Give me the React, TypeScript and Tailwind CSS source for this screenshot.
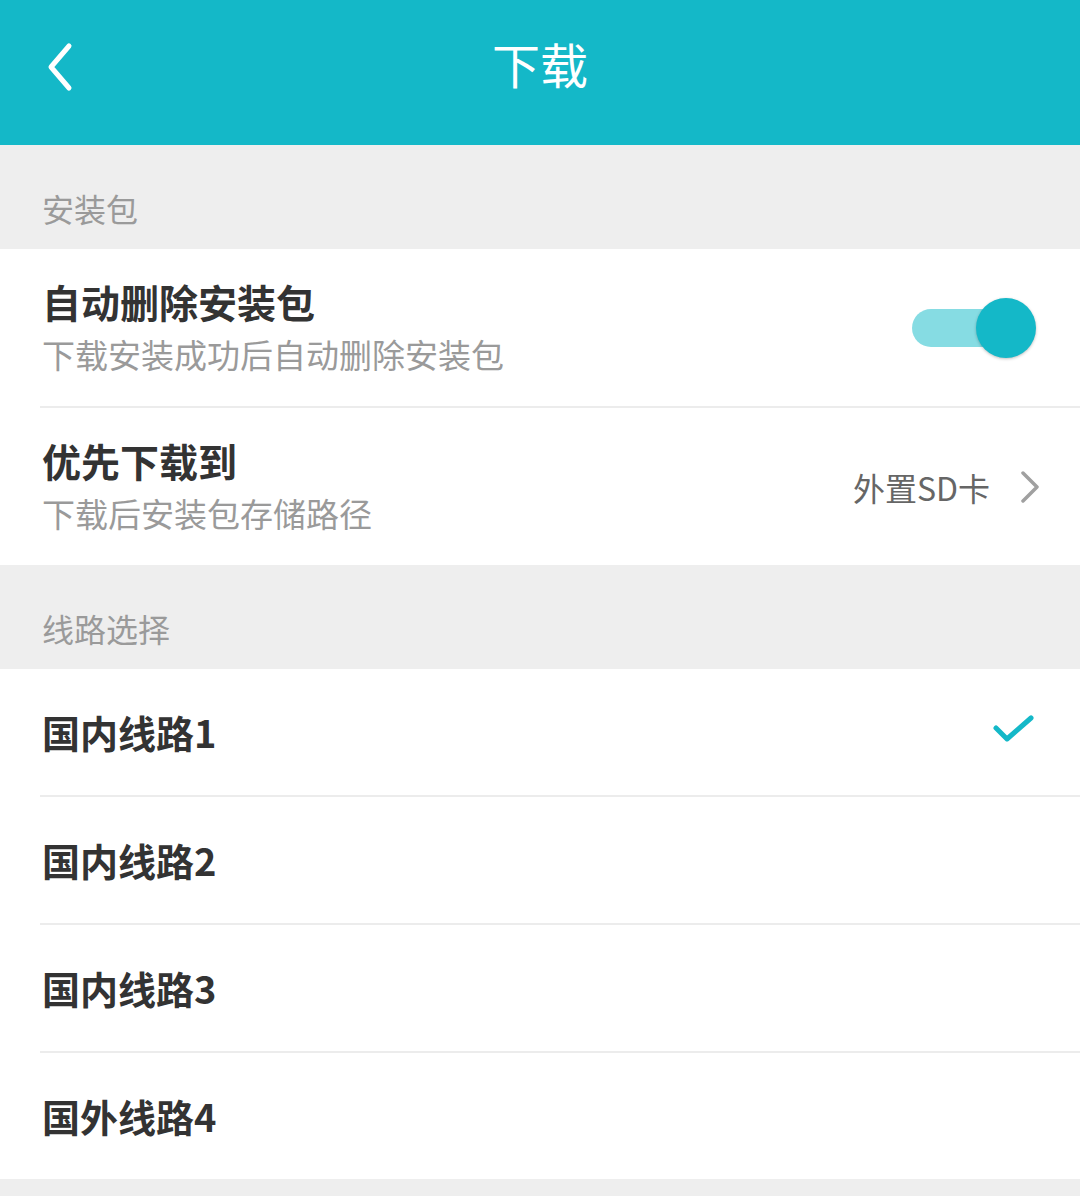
import React from 'react';

const font = { fontFamily: '"Noto Sans CJK SC", "Noto Sans", sans-serif' };

const routes = ['国内线路1', '国内线路2', '国内线路3', '国外线路4'];

function SectionHeader({ label }: { label: string }) {
  return (
    <div className="h-[104px] bg-[#eeeeee] flex items-center pl-[42px] pt-[22px]">
      <span className="text-[32px] leading-none text-[#9a9a9a]">{label}</span>
    </div>
  );
}

function Divider() {
  return (
    <div className="bg-white pl-[40px]">
      <div className="h-[2px] bg-[#ececec]" />
    </div>
  );
}

export default function App() {
  return (
    <div className="w-[1080px] h-[1196px] bg-[#eeeeee] overflow-hidden" style={font}>
      {/* Top bar */}
      <div className="relative h-[145px] bg-[#14b8c8] flex items-center justify-center">
        <button className="absolute left-[40px] top-[40px] w-[40px] h-[54px] flex items-center justify-center" aria-label="返回">
          <svg width="32" height="50" viewBox="0 0 32 50" fill="none">
            <path d="M25 4 L7 25 L25 46" stroke="white" strokeWidth="5" strokeLinecap="round" strokeLinejoin="round" />
          </svg>
        </button>
        <h1 className="text-[48px] leading-none text-white font-normal -mt-[20px]">下载</h1>
      </div>

      <SectionHeader label="安装包" />

      {/* Auto delete */}
      <div className="h-[157px] bg-white flex items-center justify-between pl-[42px] pr-[44px]">
        <div className="flex flex-col -mt-[2px]">
          <span className="text-[39px] leading-none font-bold text-[#333333]">自动删除安装包</span>
          <span className="text-[33px] leading-none text-[#9a9a9a] mt-[17px]">下载安装成功后自动删除安装包</span>
        </div>
        <div className="relative w-[126px] h-[62px] flex items-center">
          <div className="ml-[2px] w-[94px] h-[38px] rounded-full bg-[#86dce3]" />
          <div className="absolute right-0 top-[1px] w-[60px] h-[60px] rounded-full bg-[#14b8c8] shadow-[0_1px_3px_rgba(0,0,0,0.25)]" />
        </div>
      </div>
      <Divider />

      {/* Download location */}
      <div className="h-[157px] bg-white flex items-center justify-between pl-[42px] pr-[40px]">
        <div className="flex flex-col -mt-[2px]">
          <span className="text-[39px] leading-none font-bold text-[#333333]">优先下载到</span>
          <span className="text-[33px] leading-none text-[#9a9a9a] mt-[17px]">下载后安装包存储路径</span>
        </div>
        <div className="flex items-center gap-[30px]">
          <span className="text-[32px] leading-none text-[#666666]">外置SD卡</span>
          <svg width="20" height="32" viewBox="0 0 20 32" fill="none">
            <path d="M3 2 L17 16 L3 30" stroke="#a0a0a0" strokeWidth="3.5" strokeLinecap="round" strokeLinejoin="round" />
          </svg>
        </div>
      </div>

      <SectionHeader label="线路选择" />

      {routes.map((r, i) => (
        <div key={r}>
          {i > 0 && <Divider />}
          <div className="h-[126px] bg-white flex items-center justify-between pl-[42px] pr-[44px]">
            <span className="text-[38px] leading-none font-bold text-[#333333]">{r}</span>
            {i === 0 && (
              <svg width="44" height="34" viewBox="0 0 44 34" fill="none" className="-mt-[6px]">
                <path d="M4 16 L15 27 L39 6" stroke="#14b8c8" strokeWidth="5" strokeLinecap="round" strokeLinejoin="round" />
              </svg>
            )}
          </div>
        </div>
      ))}
    </div>
  );
}
